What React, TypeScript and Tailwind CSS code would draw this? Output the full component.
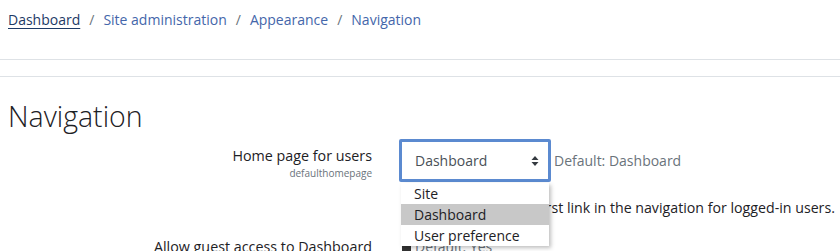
import React from "react"

const font = "font-['Open_Sans','Noto_Sans',sans-serif]"

const Crumb = ({ label, current }: { label: string; current?: boolean }) => (
    <a href="#" className={current ? "text-[#1d3a66] underline underline-offset-[3px] decoration-1" : "text-[#4466aa]"}>
        {label}
    </a>
)

const Sep = () => <span className="px-[9px] text-[#6a737b]">/</span>

const App: React.FC = () => {
    return (
        <div className={`${font} relative w-[840px] h-[251px] overflow-hidden bg-white text-[#1d2125] text-[14px]`}>
            <nav className="h-[38px] pl-2 flex items-center">
                <Crumb label="Dashboard" current />
                <Sep />
                <Crumb label="Site administration" />
                <Sep />
                <Crumb label="Appearance" />
                <Sep />
                <Crumb label="Navigation" />
            </nav>

            <div className="mt-[21px] border-t border-[#dee2e6]" />
            <div className="mt-[16px] border-t border-[#dee2e6]" />

            <h2 className="mt-[22px] pl-2 text-[28.5px] leading-[35px] font-light text-[#1d2125]">Navigation</h2>

            <div className="mt-[5px] flex">
                <div className="w-[372px] pt-[7px] text-right">
                    <div className="leading-[20px] text-[14.3px]">Home page for users</div>
                    <div className="text-[10px] leading-[14px] text-[#6a737b]">defaulthomepage</div>
                </div>
                <div className="ml-[27px] flex-1">
                    <div className="flex items-center">
                        <div className="w-[152px] h-[43px] border-[3px] border-[#5b8ad0] rounded-[2px] flex items-center pl-[13px] pr-[9px] text-[#495057]">
                            <span className="flex-1">Dashboard</span>
                            <svg width="8" height="12" viewBox="0 0 8 12">
                                <path d="M4 1 L7.5 5 H0.5 Z M4 11 L7.5 7 H0.5 Z" fill="#343a40" />
                            </svg>
                        </div>
                        <span className="ml-[3px] text-[#6a737b]">Default: Dashboard</span>
                    </div>
                    <div className="mt-[16px] pl-[3px] whitespace-nowrap leading-[20px] text-[14.2px]">This determines the first link in the navigation for logged-in users.</div>
                </div>
            </div>

            <div className="mt-[19px] flex">
                <div className="w-[372px] text-right leading-[20px] text-[14.3px]">Allow guest access to Dashboard</div>
                <div className="ml-[30px] flex items-center gap-[4px] leading-[20px] text-[#6a737b]">
                    <span className="w-[9px] h-[9px] bg-[#333] inline-block" />
                    <span>Default: Yes</span>
                </div>
            </div>

            <ul className="absolute left-[401px] top-[183px] w-[148px] bg-white shadow-[2px_2px_4px_rgba(0,0,0,0.25)] text-[14px] leading-[21px] text-[#1d2125]">
                <li className="pl-[13px] h-[21px]">Site</li>
                <li className="pl-[13px] h-[21px] bg-[#c8c8c8]">Dashboard</li>
                <li className="pl-[13px] h-[21px]">User preference</li>
            </ul>
        </div>
    )
}

export default App
